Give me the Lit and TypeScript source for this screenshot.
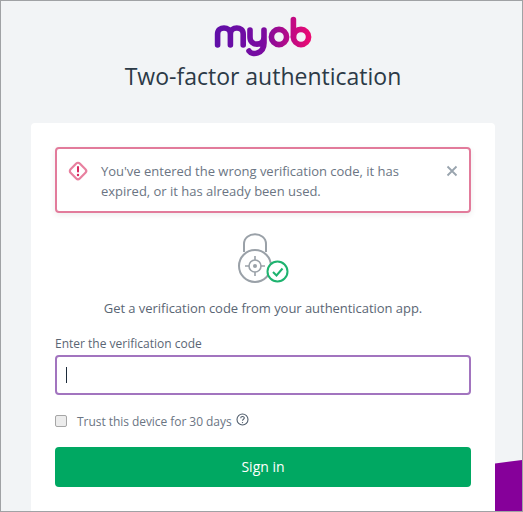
import { LitElement, html, css, svg } from "lit";
import { customElement } from "lit/decorators.js";

@customElement("app-root")
export class AppRoot extends LitElement {
  static styles = css`
    :host {
      display: block;
      box-sizing: border-box;
      width: 523px;
      height: 512px;
      position: relative;
      overflow: hidden;
      background: #f2f4f6;
      border: 1px solid #a0a2a5;
      font-family: "Open Sans", "Noto Sans", sans-serif;
      color: #515e6d;
    }
    .corner { position: absolute; right: 0; bottom: 0; width: 27px; height: 51px; display: block; }
    .page { display: flex; flex-direction: column; align-items: center; padding-left: 3px; }
    .logo { display: block; margin-top: 15px; width: 98px; height: 41px; }
    h1 {
      margin: 1px 0 0;
      font-size: 23px;
      line-height: 36px;
      font-weight: 400;
      color: #2c3a47;
    }
    .card {
      box-sizing: border-box;
      width: 464px;
      height: 400px;
      margin-top: 29px;
      background: #fff;
      border-radius: 4px 4px 0 0;
      padding: 24px 24px 0;
      display: flex;
      flex-direction: column;
    }
    .alert {
      box-sizing: border-box;
      height: 66px;
      border: 2px solid #e27b9b;
      border-radius: 4px;
      box-shadow: 0 2px 6px rgba(0, 0, 0, 0.08);
      display: flex;
      align-items: flex-start;
      padding: 11px 11px 0 10px;
    }
    .alert svg.warn { flex: none; width: 22px; height: 22px; }
    .alert p { flex: 1; margin: 1px 0 0 12px; font-size: 13px; line-height: 20px; color: #6b7583; letter-spacing: -0.01px; }
    .alert svg.x { flex: none; width: 12px; height: 12px; margin-top: 5px; }
    .lock { display: block; width: 54px; height: 54px; margin: 17px auto 0; }
    .hint { margin: 14px 0 0; text-align: center; font-size: 13px; line-height: 20px; color: #5a6674; letter-spacing: -0.04px; }
    label.field { display: block; margin-top: 17px; font-size: 12px; line-height: 18px; color: #5a6674; }
    .input {
      box-sizing: border-box;
      height: 40px;
      margin-top: 2px;
      border: 2px solid #a274bf;
      border-radius: 4px;
      display: flex;
      align-items: center;
      padding-left: 9px;
    }
    .caret { width: 1px; height: 16px; background: #1c2b3a; }
    .trust { display: flex; align-items: center; margin-top: 16px; height: 20px; font-size: 12px; color: #6b7583; letter-spacing: -0.05px; }
    .trust input {
      appearance: none;
      box-sizing: border-box;
      margin: 0;
      width: 12px;
      height: 12px;
      flex: none;
      background: #ececec;
      border: 1px solid #a6a6a6;
      border-radius: 2px;
    }
    .trust span { margin-left: 10px; }
    .trust svg { width: 13px; height: 13px; margin: -3px 0 0 4px; }
    button {
      display: block;
      width: 100%;
      height: 40px;
      margin-top: 16px;
      border: 0;
      border-radius: 4px;
      padding: 0 0 2px;
      background: #00a862;
      color: #fff;
      font: 400 14px "Open Sans", sans-serif;
    }
  `;

  render() {
    return html`
      <svg class="corner" viewBox="0 0 27 51" aria-hidden="true"><path d="M0 3.5 L27 0 V51 H0 Z" fill="#86009a" /></svg>
      <div class="page">
        <svg class="logo" viewBox="0 0 98 41" role="img" aria-label="myob">
          <defs>
            <linearGradient id="g" gradientUnits="userSpaceOnUse" x1="0" y1="0" x2="98" y2="0">
              <stop offset="0" stop-color="#5f0fa8" />
              <stop offset="0.5" stop-color="#7a0ba0" />
              <stop offset="1" stop-color="#ef0a70" />
            </linearGradient>
          </defs>
          <g fill="none" stroke="url(#g)" stroke-width="5.6" stroke-linecap="round" stroke-linejoin="round">
            ${svg`
              <path d="M3.6 29 V18 C3.6 10 16.4 10 16.4 18 V29 M16.4 18 C16.4 10 29.2 10 29.2 18 V29" />
              <path d="M36 14 V21 C36 30.5 50 30.5 50 21 V14 M50 21 V27 C50 38 38 39.5 35 35" />
              <circle cx="65" cy="21" r="7.6" />
              <circle cx="87" cy="21" r="7.6" />
              <path d="M79.4 21 V3.5" />
            `}
          </g>
        </svg>
        <h1>Two-factor authentication</h1>
        <div class="card">
          <div class="alert">
            <svg class="warn" viewBox="0 0 22 22">
              <rect x="4.5" y="4.5" width="13" height="13" rx="2.5" transform="rotate(45 11 11)" fill="none" stroke="#e8809f" stroke-width="2.2" />
              <rect x="10" y="6" width="2" height="6.5" rx="1" fill="#d9265f" />
              <circle cx="11" cy="15" r="1.2" fill="#d9265f" />
            </svg>
            <p>You've entered the wrong verification code, it has expired, or it has already been used.</p>
            <svg class="x" viewBox="0 0 12 12"><path d="M1.5 1.5 L10.5 10.5 M10.5 1.5 L1.5 10.5" stroke="#99a4ae" stroke-width="1.8" fill="none" /></svg>
          </div>
          <svg class="lock" viewBox="0 0 54 54" aria-hidden="true">
            <g fill="none" stroke="#9aa1a8" stroke-width="1.6">
              <path d="M8 20 V12 C8 -1 30 -1 30 12 V20" stroke-width="2" transform="translate(0 2)" />
              <circle cx="19" cy="36" r="16" stroke-width="2" fill="#fff" />
              <circle cx="19" cy="36" r="6" />
              <path d="M19 26 V30 M19 42 V46 M9 36 H13 M25 36 H29" />
            </g>
            <circle cx="19" cy="36" r="2" fill="#9aa1a8" />
            <circle cx="41.5" cy="41.5" r="10" fill="#fff" stroke="#1eb36f" stroke-width="2" />
            <path d="M37 42 L40.5 45.5 L46.5 38.5" fill="none" stroke="#1eb36f" stroke-width="2" />
          </svg>
          <p class="hint">Get a verification code from your authentication app.</p>
          <label class="field">Enter the verification code</label>
          <div class="input"><div class="caret"></div></div>
          <label class="trust">
            <input type="checkbox" />
            <span>Trust this device for 30 days</span>
            <svg viewBox="0 0 13 13">
              <circle cx="6.5" cy="6.5" r="5.5" fill="none" stroke="#515e6d" stroke-width="1.1" />
              <path d="M4.7 5.2 C4.7 3 8.3 3 8.3 5.1 C8.3 6.4 6.5 6.2 6.5 7.8" fill="none" stroke="#515e6d" stroke-width="1.1" />
              <circle cx="6.5" cy="9.6" r="0.7" fill="#515e6d" />
            </svg>
          </label>
          <button>Sign in</button>
        </div>
      </div>
    `;
  }
}
